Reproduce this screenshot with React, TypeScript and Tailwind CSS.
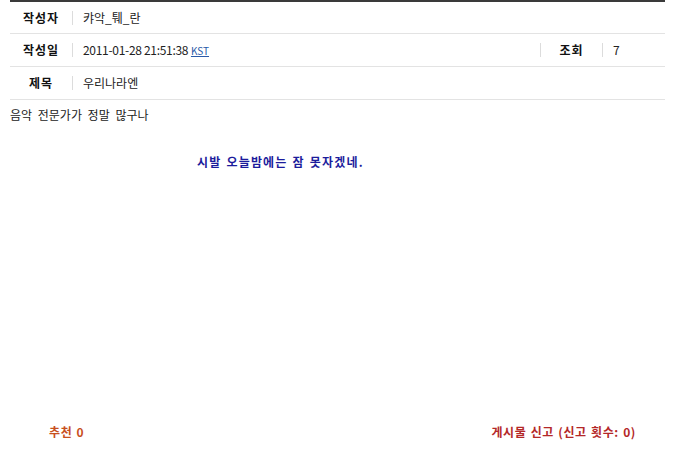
const font = { fontFamily: '"Noto Sans CJK KR", "Noto Sans", sans-serif' };

function Sep() {
  return <span className="w-px h-[14px] bg-[#dcdcdc] shrink-0" />;
}

function Row({ label, children, extra, first }: { label: string; children: React.ReactNode; extra?: React.ReactNode; first?: boolean }) {
  return (
    <div className={`flex items-center border-b border-[#e3e3e3] ${first ? 'h-[32px]' : 'h-[33px]'}`}>
      <span className="w-[62px] text-center font-bold text-[12px] text-[#111] tracking-[1px]">{label}</span>
      <Sep />
      <span className="pl-[10px] flex-1 text-[12px] text-[#222]">{children}</span>
      {extra}
    </div>
  );
}

export default function App() {
  return (
    <div className="w-[673px] h-[454px] bg-white relative" style={font}>
      <div className="ml-[10px] w-[655px] border-t-2 border-[#3a3a3a]">
        <Row label="작성자" first>캬악_퉤_란</Row>
        <Row
          label="작성일"
          extra={
            <div className="flex items-center w-[125px]">
              <Sep />
              <span className="w-[61px] text-center font-bold text-[12px] text-[#111] tracking-[1px]">조회</span>
              <Sep />
              <span className="pl-[10px] text-[12px] text-[#222]">7</span>
            </div>
          }
        >
          <span className="tracking-[-0.3px]">2011-01-28 21:51:38</span>{' '}
          <a href="#" className="text-[10px] text-[#2a5aa8] underline">KST</a>
        </Row>
        <Row label="제목">우리나라엔</Row>
      </div>
      <div className="pl-[10px] pt-[6px] text-[12px] text-[#222] [word-spacing:3px]">음악 전문가가 정말 많구나</div>
      <div className="pt-[29px] pl-[197px] text-[12px] font-bold text-[#1c1c9c] tracking-[1.2px] [word-spacing:1px]">
        시발 오늘밤에는 잠 못자겠네.
      </div>
      <div className="absolute left-0 right-0 top-[423px] flex justify-between pl-[49px] pr-[37px] text-[12px] font-bold tracking-[0.6px] [word-spacing:1px]">
        <span className="text-[#c8501e]">추천 0</span>
        <span className="text-[#b42828]">게시물 신고 (신고 횟수: 0)</span>
      </div>
    </div>
  );
}
